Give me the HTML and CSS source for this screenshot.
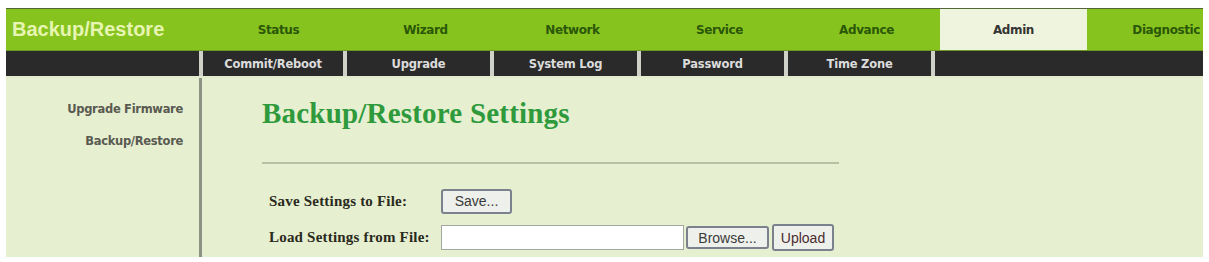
FILE: index.html
```html
<!DOCTYPE html>
<html>
<head>
<meta charset="utf-8">
<link rel="stylesheet" href="styles.css">
</head>
<body>
<div class="frame">
  <div class="topbar">
    <div class="brand">Backup/Restore</div>
    <div class="tab">Status</div>
    <div class="tab">Wizard</div>
    <div class="tab">Network</div>
    <div class="tab">Service</div>
    <div class="tab">Advance</div>
    <div class="tab active">Admin</div>
    <div class="tab tab-last">Diagnostic</div>
  </div>
  <div class="subbar">
    <div class="sub-blank"></div>
    <div class="sub sub-first">Commit/Reboot</div>
    <div class="sub">Upgrade</div>
    <div class="sub">System Log</div>
    <div class="sub">Password</div>
    <div class="sub">Time Zone</div>
    <div class="sub-rest"></div>
  </div>
  <div class="main">
    <div class="side">
      <div class="side-link">Upgrade Firmware</div>
      <div class="side-link">Backup/Restore</div>
    </div>
    <div class="content">
      <h1 class="title">Backup/Restore Settings</h1>
      <div class="rule"></div>
      <div class="row row-save">
        <span class="label">Save Settings to File:</span>
        <span class="btn btn-save">Save...</span>
      </div>
      <div class="row row-load">
        <span class="label">Load Settings from File:</span>
        <span class="file-input"></span>
        <span class="btn btn-browse">Browse...</span>
        <span class="btn btn-upload">Upload</span>
      </div>
    </div>
  </div>
</div>
</body>
</html>
```

FILE: styles.css
```css
html, body {
  margin: 0;
  padding: 0;
  background: #ffffff;
}
body {
  padding: 8px 6px 0 6px;
  font-family: "Liberation Sans", Arial, sans-serif;
}
.frame {
  width: 1197px;
  border-top: 1px solid #55653a;
}
.topbar {
  display: flex;
  height: 42px;
  background: #87c31f;
  border-bottom: 1px solid #6f9a22;
  box-sizing: border-box;
}
.brand {
  width: 199px;
  flex: none;
  display: flex;
  align-items: center;
  padding-left: 6px;
  box-sizing: border-box;
  font-size: 20px;
  font-weight: bold;
  color: #e6f5b2;
  white-space: nowrap;
}
.tab {
  width: 147px;
  flex: none;
  display: flex;
  align-items: center;
  justify-content: center;
  font-family: "DejaVu Sans", Verdana, sans-serif;
  font-size: 12px;
  font-weight: bold;
  color: #2b5708;
  letter-spacing: -0.4px;
}
.tab.active {
  background: #eef4dd;
  color: #353535;
}
.tab-last {
  width: auto;
  flex: 1;
  justify-content: flex-end;
  padding-right: 3px;
}
.subbar {
  display: flex;
  height: 25px;
  background: #cfd2c8;
  border-bottom: 2px solid #e2ead0;
  gap: 4px;
}
.sub-blank {
  width: 193px;
  flex: none;
  background: #2a2a2a;
}
.sub {
  width: 143px;
  flex: none;
  background: #2a2a2a;
  color: #dcdcdc;
  font-family: "DejaVu Sans", Verdana, sans-serif;
  font-size: 11.5px;
  font-weight: bold;
  display: flex;
  align-items: center;
  justify-content: center;
  letter-spacing: -0.2px;
}
.sub-first {
  width: 140px;
}
.sub-rest {
  flex: 1;
  background: #2a2a2a;
}
.main {
  display: flex;
  height: 179px;
  background: #e6efd0;
}
.side {
  width: 196px;
  flex: none;
  box-sizing: border-box;
  padding-top: 23px;
  padding-right: 16px;
  text-align: right;
  border-right: 3px solid #8c9384;
}
.side-link {
  font-family: "DejaVu Sans", Verdana, sans-serif;
  font-size: 11.5px;
  font-weight: bold;
  color: #595a50;
  height: 32px;
  line-height: 16px;
  letter-spacing: -0.3px;
}
.content {
  flex: 1;
  padding-left: 60px;
}
.title {
  margin: 18px 0 0 0;
  font-family: "Liberation Serif", "Times New Roman", serif;
  font-size: 29px;
  font-weight: bold;
  color: #2e9a3c;
  line-height: 34px;
  letter-spacing: 0.2px;
}
.rule {
  width: 577px;
  height: 0;
  border-top: 2px solid #b8c1a6;
  margin-top: 32px;
}
.row {
  display: flex;
  align-items: center;
  padding-left: 7px;
  font-family: "Liberation Serif", "Times New Roman", serif;
  font-size: 15px;
  font-weight: bold;
  color: #2a2a20;
  letter-spacing: 0.2px;
}
.row-save {
  margin-top: 24px;
  height: 26px;
}
.row-load {
  margin-top: 10px;
  height: 27px;
}
.label {
  width: 172px;
  flex: none;
  white-space: nowrap;
}
.btn {
  font-family: "Liberation Sans", Arial, sans-serif;
  font-weight: normal;
  font-size: 14px;
  letter-spacing: 0;
  color: #3a3a3a;
  background: #eef0ec;
  border: 2px solid #7b828d;
  border-radius: 3px;
  display: flex;
  align-items: center;
  justify-content: center;
  box-sizing: border-box;
  flex: none;
}
.btn-save {
  width: 71px;
  height: 25px;
}
.file-input {
  width: 243px;
  height: 25px;
  background: #ffffff;
  border: 1px solid #a2a8a0;
  box-sizing: border-box;
  flex: none;
}
.btn-browse {
  width: 83px;
  height: 23px;
  margin-left: 2px;
}
.btn-upload {
  width: 62px;
  height: 27px;
  margin-left: 3px;
  color: #4a2c2c;
}
```
